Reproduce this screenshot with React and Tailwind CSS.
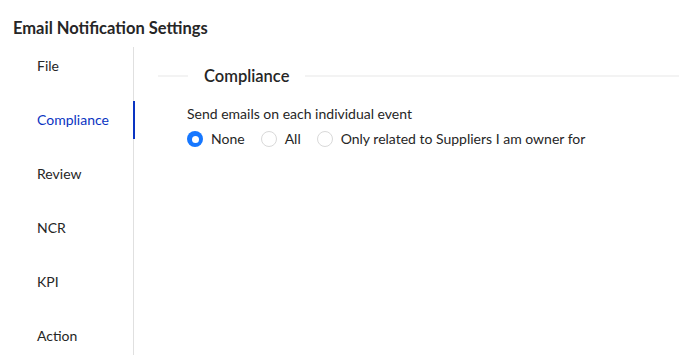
import React from "react";

const tabs = ["File", "Compliance", "Review", "NCR", "KPI", "Action"];

function Radio({ checked, label }) {
  return (
    <label className="flex items-center mr-2">
      <span
        className={
          checked
            ? "w-4 h-4 rounded-full bg-[#1677ff] flex items-center justify-center"
            : "w-4 h-4 rounded-full border border-[#d9d9d9] bg-white"
        }
      >
        {checked && <span className="w-[7px] h-[7px] rounded-full bg-white" />}
      </span>
      <span className="px-2 text-[14px] leading-[22px] text-[#262626]">{label}</span>
    </label>
  );
}

export default function App() {
  return (
    <div
      className="w-[679px] h-[360px] bg-white overflow-hidden text-[#262626]"
      style={{ fontFamily: "Lato, 'Noto Sans', sans-serif" }}
    >
      <div className="pl-[13px] pt-[17px] text-[16.5px] font-bold leading-[22px] text-[#262626]">
        Email Notification Settings
      </div>
      <div className="flex pl-[13px] mt-[8px]">
        <div className="w-[121px] border-r border-[#e0e0e0] flex flex-col">
          {tabs.map((t, i) => (
            <div
              key={t}
              className={
                "relative pl-[24px] py-[8px] text-[14px] leading-[22px] " +
                (i > 0 ? "mt-[16px] " : "") +
                (t === "Compliance" ? "text-[#0a34c2]" : "text-[#262626]")
              }
            >
              {t}
              {t === "Compliance" && (
                <span className="absolute right-[-2px] top-0 bottom-0 w-[2px] bg-[#0a34c2]" />
              )}
            </div>
          ))}
        </div>
        <div className="flex-1 pl-[24px] pt-[17px]">
          <div className="flex items-center">
            <div className="w-[30px] h-[2px] bg-[#f3f3f3]" />
            <div className="px-[16px] text-[16.5px] font-semibold leading-[24px] text-[#262626]">
              Compliance
            </div>
            <div className="flex-1 h-[2px] bg-[#f3f3f3]" />
          </div>
          <div className="pl-[29px] mt-[15px]">
            <div className="text-[14px] leading-[22px]">Send emails on each individual event</div>
            <div className="flex items-center mt-[3px]">
              <Radio checked label="None" />
              <Radio label="All" />
              <Radio label="Only related to Suppliers I am owner for" />
            </div>
          </div>
        </div>
      </div>
    </div>
  );
}
